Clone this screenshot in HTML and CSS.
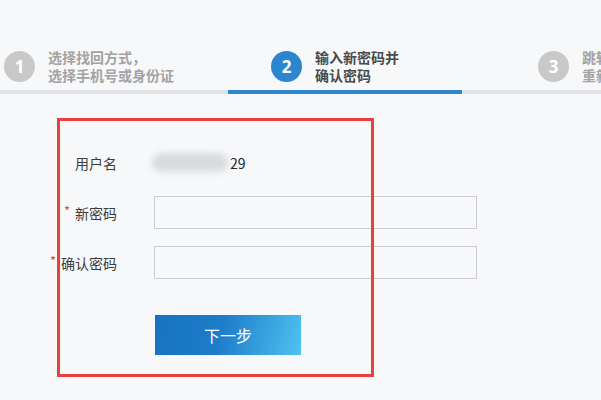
FILE: index.html
```html
<!DOCTYPE html>
<html lang="zh-CN">
<head>
<meta charset="utf-8">
<title>找回密码</title>
<link rel="stylesheet" href="styles.css">
</head>
<body>
<div class="page">
  <div class="steps">
    <div class="step-row">
      <div class="step">
        <span class="num">1</span>
        <span class="step-text">选择找回方式，<br>选择手机号或身份证</span>
      </div>
      <div class="step active">
        <span class="num">2</span>
        <span class="step-text">输入新密码并<br>确认密码</span>
      </div>
      <div class="step last">
        <span class="num">3</span>
        <span class="step-text">跳转到登录页，<br>重新登录</span>
      </div>
    </div>
    <div class="bar">
      <span class="seg seg-done"></span>
      <span class="seg seg-active"></span>
      <span class="seg seg-rest"></span>
    </div>
  </div>

  <form class="form">
    <div class="row">
      <label class="label">用户名</label>
      <div class="value"><span class="blur"></span><span class="tail">29</span></div>
    </div>
    <div class="row">
      <label class="label"><span class="star">*</span>新密码</label>
      <input class="input" type="password">
    </div>
    <div class="row">
      <label class="label"><span class="star">*</span>确认密码</label>
      <input class="input" type="password">
    </div>
    <button class="btn" type="button">下一步</button>
  </form>
</div>
</body>
</html>
```

FILE: styles.css
```css
* { box-sizing: border-box; }
html, body {
  margin: 0;
  padding: 0;
  background: #f7f8fa;
  overflow: hidden;
}
body {
  font-family: "Noto Sans CJK SC", "Noto Sans", sans-serif;
  width: 601px;
  height: 400px;
}
.page { width: 601px; overflow: hidden; }

.steps { padding-top: 48px; }
.step-row {
  display: flex;
  height: 36px;
  overflow: hidden;
}
.step {
  flex: none;
  width: 267px;
  padding-left: 4px;
  display: flex;
  align-items: center;
  gap: 13px;
  white-space: nowrap;
}
.step.last { width: 67px; overflow: hidden; }
.num {
  flex: none;
  width: 31px;
  height: 31px;
  border-radius: 50%;
  background: #c9c9c9;
  color: #fff;
  font-family: "Open Sans", "Noto Sans", sans-serif;
  font-weight: 700;
  font-size: 17px;
  display: flex;
  align-items: center;
  justify-content: center;
}
.step-text {
  font-size: 14px;
  line-height: 18px;
  font-weight: 700;
  color: #a3a3a3;
}
.step.active .num { background: #2b86cf; }
.step.active .step-text { color: #4a4a4a; }

.bar {
  display: flex;
  height: 4px;
  margin-top: 6px;
}
.seg { display: block; height: 4px; }
.seg-done { width: 228px; background: #e1e3e7; }
.seg-active { width: 234px; background: #2f86c9; }
.seg-rest { flex: 1; background: #e1e3e7; }

.form {
  position: relative;
  margin: 24px 0 0 57px;
  width: 317px;
  height: 259px;
  padding: 28px 0 0 3px;
}
.form::after {
  content: "";
  position: absolute;
  inset: 0;
  border: 3px solid #e8403f;
  pointer-events: none;
  z-index: 2;
}
.row {
  display: flex;
  align-items: center;
  height: 33px;
  margin-bottom: 17px;
}
.label {
  flex: none;
  width: 57px;
  display: flex;
  justify-content: flex-end;
  align-items: center;
  white-space: nowrap;
  font-size: 14px;
  color: #3c3c3c;
  margin-right: 37px;
}
.star {
  color: #e8403f;
  font-size: 13px;
  margin-right: 5px;
  position: relative;
  top: -2px;
}
.value {
  display: flex;
  align-items: center;
  font-size: 14px;
  color: #222;
}
.blur {
  display: inline-block;
  width: 76px;
  height: 19px;
  margin-left: -2px;
  border-radius: 9px;
  background: #dadbde;
  filter: blur(3px);
}
.tail { margin-left: 2px; }
.input {
  flex: none;
  width: 323px;
  height: 33px;
  border: 1px solid #cdcdcf;
  background: #f7f8fa;
  margin: 0;
  padding: 0 8px;
  outline: none;
}
.btn {
  display: block;
  margin: 36px 0 0 95px;
  width: 146px;
  height: 40px;
  border: none;
  padding: 0;
  background: linear-gradient(105deg, #1673c2 0%, #1d7dca 45%, #4ec3f0 100%);
  color: #fff;
  font-family: "Noto Sans CJK SC", sans-serif;
  font-size: 16px;
  cursor: pointer;
}
```
